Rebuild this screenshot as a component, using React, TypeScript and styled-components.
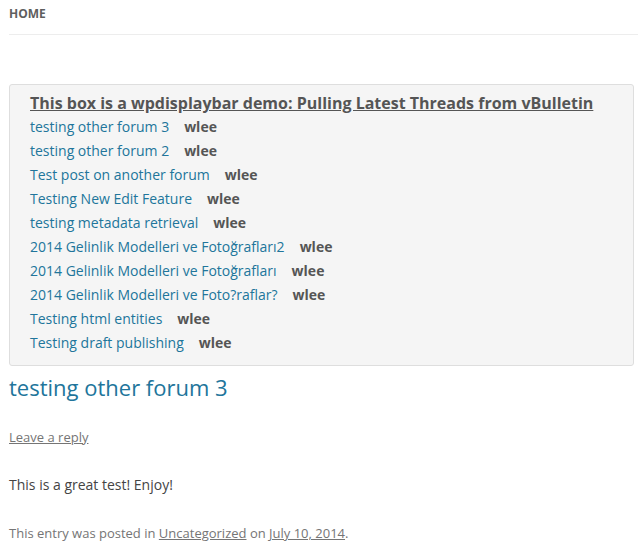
import React from "react";
import styled, { createGlobalStyle } from "styled-components";

const Global = createGlobalStyle`
  html, body { margin: 0; padding: 0; background: #fff; }
  body { font-family: "Open Sans", "Liberation Sans", sans-serif; color: #444; }
`;

const Page = styled.div`
  padding: 0 0 0 9px;
`;

const Nav = styled.nav`
  border-bottom: 1px solid #ededed;
  height: 35px;
  box-sizing: border-box;
`;

const NavItem = styled.a`
  display: inline-block;
  font-size: 12px;
  font-weight: 700;
  line-height: 28px;
  color: #5e5e5e;
  text-decoration: none;
  text-transform: uppercase;
`;

const Box = styled.div`
  margin: 49px 4px 0 0;
  width: 625px;
  box-sizing: border-box;
  background: #f5f5f5;
  border: 1px solid #dedede;
  border-radius: 3px;
  padding: 6px 20px 10px 20px;
`;

const BoxTitle = styled.a`
  display: block;
  font-size: 16px;
  font-weight: 700;
  line-height: 24px;
  color: #555;
  text-decoration: underline;
`;

const Row = styled.div`
  display: flex;
  align-items: baseline;
  gap: 15px;
  font-size: 14px;
  line-height: 24px;
`;

const ThreadLink = styled.a`
  color: #21759b;
  text-decoration: none;
`;

const Author = styled.span`
  font-weight: 700;
  color: #555;
`;

const EntryTitle = styled.h1`
  margin: 4px 0 0;
  font-size: 22px;
  font-weight: 400;
  line-height: 34px;
  color: #21759b;
`;

const ReplyLink = styled.a`
  display: inline-block;
  margin-top: 23px;
  font-size: 13px;
  line-height: 20px;
  color: #757575;
  text-decoration: underline;
`;

const Content = styled.p`
  margin: 26px 0 0;
  font-size: 14px;
  line-height: 24px;
  color: #444;
`;

const Meta = styled.footer`
  margin-top: 24px;
  font-size: 13px;
  line-height: 24px;
  color: #757575;
`;

const MetaLink = styled.a`
  color: #757575;
  text-decoration: underline;
`;

const threads = [
  "testing other forum 3",
  "testing other forum 2",
  "Test post on another forum",
  "Testing New Edit Feature",
  "testing metadata retrieval",
  "2014 Gelinlik Modelleri ve Fotoğrafları2",
  "2014 Gelinlik Modelleri ve Fotoğrafları",
  "2014 Gelinlik Modelleri ve Foto?raflar?",
  "Testing html entities",
  "Testing draft publishing",
];

export default function App() {
  return (
    <Page>
      <Global />
      <Nav>
        <NavItem>Home</NavItem>
      </Nav>
      <Box>
        <BoxTitle>This box is a wpdisplaybar demo: Pulling Latest Threads from vBulletin</BoxTitle>
        {threads.map((t) => (
          <Row key={t}>
            <ThreadLink>{t}</ThreadLink>
            <Author>wlee</Author>
          </Row>
        ))}
      </Box>
      <EntryTitle>testing other forum 3</EntryTitle>
      <ReplyLink>Leave a reply</ReplyLink>
      <Content>This is a great test! Enjoy!</Content>
      <Meta>
        This entry was posted in <MetaLink>Uncategorized</MetaLink> on <MetaLink>July 10, 2014</MetaLink>.
      </Meta>
    </Page>
  );
}
